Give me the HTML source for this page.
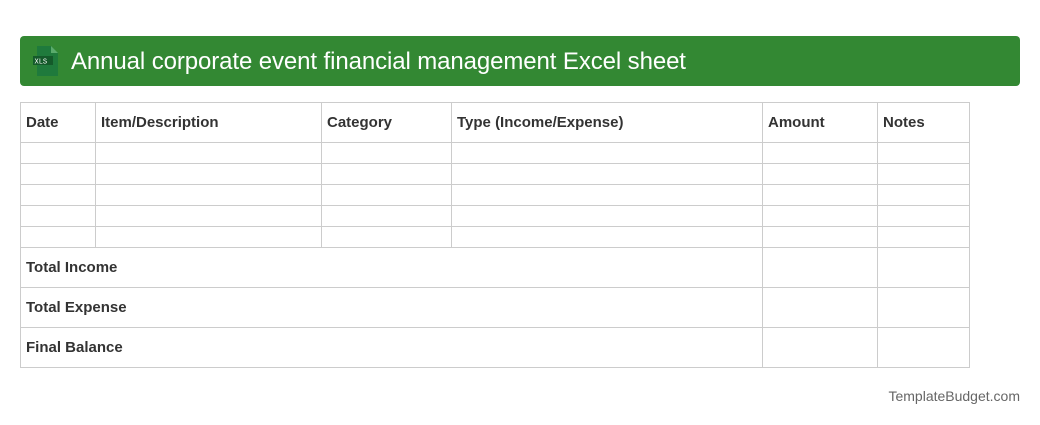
<!DOCTYPE html>
<html><head><style>
body{margin:0;background:#fff;font-family:"Liberation Sans",Arial,sans-serif;width:1040px;height:425px;position:relative;overflow:hidden}
.hdr{position:absolute;left:20px;top:36px;width:1000px;height:50px;background:#338833;border-radius:4px}
.hdr span{position:absolute;left:51px;top:11px;color:#fff;font-size:24px;line-height:30px;letter-spacing:-0.1px}
.ic{position:absolute;left:11px;top:9px}
table{position:absolute;left:20px;top:102px;border-collapse:collapse;width:950px}
td{border:1px solid #ccc;padding:0 5px;font-size:15px;font-weight:bold;color:#333;height:20px}
tr.h td{height:39px}
.ft{position:absolute;right:20px;top:388px;font-size:14px;color:#666}
</style></head><body>
<div class="hdr"><svg class="ic" width="30" height="32" viewBox="0 0 30 32"><path d="M6 1h14l7 7v23H6z" fill="#1f7a3c"/><path d="M20 1v7h7z" fill="#5aab6c"/><rect x="2" y="11" width="20" height="9" fill="#145a2a"/><text x="3.5" y="18.5" font-size="7" fill="#fff" font-family="Liberation Mono">XLS</text></svg><span>Annual corporate event financial management Excel sheet</span></div>
<table>
<colgroup><col style="width:75px"><col style="width:226px"><col style="width:130px"><col style="width:311px"><col style="width:115px"><col style="width:92px"></colgroup>
<tr class="h"><td>Date</td><td>Item/Description</td><td>Category</td><td>Type (Income/Expense)</td><td>Amount</td><td>Notes</td></tr>
<tr><td></td><td></td><td></td><td></td><td></td><td></td></tr>
<tr><td></td><td></td><td></td><td></td><td></td><td></td></tr>
<tr><td></td><td></td><td></td><td></td><td></td><td></td></tr>
<tr><td></td><td></td><td></td><td></td><td></td><td></td></tr>
<tr><td></td><td></td><td></td><td></td><td></td><td></td></tr>
<tr class="h"><td colspan="4">Total Income</td><td></td><td></td></tr>
<tr class="h"><td colspan="4">Total Expense</td><td></td><td></td></tr>
<tr class="h"><td colspan="4">Final Balance</td><td></td><td></td></tr>
</table>
<div class="ft">TemplateBudget.com</div>
</body></html>
